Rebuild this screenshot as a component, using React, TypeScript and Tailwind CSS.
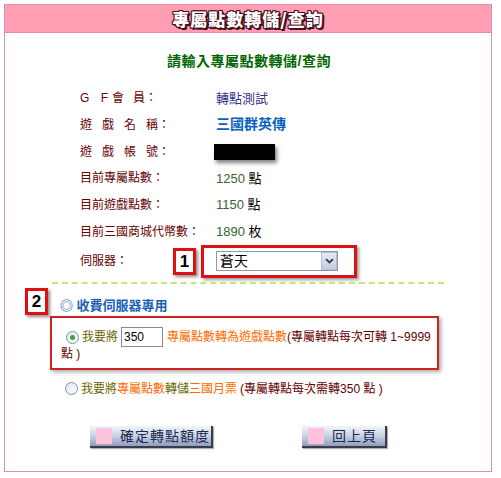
import React from "react";

const font = "font-['Liberation_Sans','Noto_Sans_CJK_TC',sans-serif]";

function Row({ label, children }: { label: React.ReactNode; children: React.ReactNode }) {
  return (
    <div className="flex items-center h-[26.67px]">
      <div className="w-[211px] pl-[75px] text-[12px] text-[#660000] whitespace-nowrap shrink-0">{label}</div>
      <div className="text-[13px] whitespace-nowrap">{children}</div>
    </div>
  );
}

function Marker({ n }: { n: string }) {
  return (
    <div className="w-[23px] h-[27px] border-[3px] border-[#dd1111] bg-white flex items-center justify-center text-[17px] font-bold text-black shadow-[2px_2px_3px_rgba(0,0,0,0.45)]">
      {n}
    </div>
  );
}

function Radio({ checked }: { checked?: boolean }) {
  return (
    <span className="inline-flex w-[13px] h-[13px] rounded-full border border-[#7a8ea8] bg-gradient-to-br from-[#dfe6ee] to-white items-center justify-center mr-[3px] align-middle">
      {checked && <span className="w-[5px] h-[5px] rounded-full bg-[#3fa33f]" />}
    </span>
  );
}

function Btn({ label, w }: { label: string; w: string }) {
  return (
    <div className={`${w} h-[22px] flex items-center whitespace-nowrap bg-gradient-to-b from-[#f2f5fb] via-[#c9d2e3] to-[#8e9ebe] border-r-2 border-b-2 border-[#3a3a48] shadow-[1px_1px_1px_rgba(0,0,0,0.3)]`}>
      <span className="w-[16px] h-[16px] bg-[#ffc2dc] ml-[6px] mr-[8px] shrink-0" />
      <span className="text-[14px] text-[#1c2850] tracking-[1px] font-['Noto_Sans_CJK_TC',sans-serif]">{label}</span>
    </div>
  );
}

export default function App() {
  return (
    <div className={`w-[501px] h-[478px] bg-white pt-[4px] pl-[4px] ${font}`}>
      <div className="w-[488px] h-[468px] border border-[#e38db6] flex flex-col">
        <div className="h-[28px] bg-[#ff9eb2] border-b border-[#e88aa3] flex items-center justify-center">
          <span className="text-[17px] font-black text-white tracking-[1px] font-['Noto_Sans_CJK_TC',sans-serif] [text-shadow:1px_0_0_#4a0f1c,-1px_0_0_#4a0f1c,0_1px_0_#4a0f1c,0_-1px_0_#4a0f1c,1px_1px_0_#4a0f1c,-1px_-1px_0_#4a0f1c,1px_-1px_0_#4a0f1c,-1px_1px_0_#4a0f1c,2px_2px_0_#4a0f1c,2px_1px_0_#4a0f1c,1px_2px_0_#4a0f1c]">
            專屬點數轉儲/查詢
          </span>
        </div>

        <div className="pt-[18px] text-center text-[14px] tracking-[0.5px] font-bold text-[#006600] leading-[20px] pl-[2px]">
          請輸入專屬點數轉儲/查詢
        </div>

        <div className="mt-[14px] flex flex-col">
          <Row label={<span><span className="tracking-[4px]">G F</span>會<span className="ml-[9px]">員：</span></span>}>
            <span className="text-[#333388]">轉點測試</span>
          </Row>
          <Row label={<span><span className="tracking-[10px]">遊戲名</span>稱：</span>}>
            <span className="text-[#0a5fc0] font-bold text-[14px]">三國群英傳</span>
          </Row>
          <Row label={<span><span className="tracking-[10px]">遊戲帳</span>號：</span>}>
            <span className="inline-block w-[61px] h-[16px] bg-black ml-[-2px] shadow-[2px_3px_4px_rgba(0,0,0,0.5)] align-middle" />
          </Row>
          <Row label="目前專屬點數：">
            <span className="text-[#336633]">1250</span> <span className="text-black">點</span>
          </Row>
          <Row label="目前遊戲點數：">
            <span className="text-[#336633]">1150</span> <span className="text-black">點</span>
          </Row>
          <Row label="目前三國商城代幣數：">
            <span className="text-[#336633]">1890</span> <span className="text-black">枚</span>
          </Row>
          <div className="flex items-center h-[33px]">
            <div className="w-[168px] pl-[75px] text-[12px] text-[#660000] whitespace-nowrap shrink-0">伺服器：</div>
            <Marker n="1" />
            <div className="ml-[5px] w-[156px] h-[33px] border-[3px] border-[#dd1111] shadow-[2px_2px_3px_rgba(0,0,0,0.4)] flex items-center pl-[12px]">
              <div className="w-[122px] h-[20px] border border-[#9098a8] bg-white flex items-center justify-between">
                <span className="text-[14px] text-black pl-[3px]">蒼天</span>
                <span className="w-[16px] h-[18px] border border-[#b4bfd2] bg-gradient-to-b from-[#e4eaf4] to-[#c4cee0] flex items-center justify-center">
                  <svg width="9" height="6" viewBox="0 0 9 6"><path d="M1 1.2 L4.5 4.5 L8 1.2" fill="none" stroke="#2c3a58" strokeWidth="1.8" /></svg>
                </span>
              </div>
            </div>
          </div>
        </div>

        <div className="mt-[4px] ml-[47px] w-[392px] border-t-2 border-dashed border-[#c6e37c]" />

        <div className="relative mt-[4px] h-[28px]">
          <div className="absolute left-[20px] top-0">
            <Marker n="2" />
          </div>
          <div className="absolute left-[55px] top-[8px] text-[13px] font-bold text-[#1a5fb4] whitespace-nowrap">◎ 收費伺服器專用</div>
        </div>

        <div className="ml-[45px] w-[389px] h-[54px] border-2 border-[#cc2222] shadow-[2px_2px_4px_rgba(0,0,0,0.35)] pl-[9px] pt-[9px] text-[12px] leading-[20px] whitespace-nowrap">
          <div className="flex items-center">
            <span className="ml-[5px]"><Radio checked /></span>
            <span className="text-[#666600]">我要將</span>
            <span className="inline-flex items-center w-[42px] h-[20px] border border-[#8a8a8a] ml-[3px] mr-[4px] pl-[2px] text-[12px] text-black">350</span>
            <span className="text-[#ff6a00]">專屬點數轉為遊戲點數</span>
            <span className="text-[#660000]">(專屬轉點每次可轉 1~9999</span>
          </div>
          <div className="text-[#660000] leading-[14px]">點 )</div>
        </div>

        <div className="flex items-center mt-[10px] ml-[60px] text-[12px] whitespace-nowrap">
          <Radio />
          <span className="text-[#666600]">我要將</span>
          <span className="text-[#ff6a00]">專屬點數</span>
          <span className="text-[#666600]">轉儲</span>
          <span className="text-[#ff6a00]">三國月票</span>
          <span className="text-[#660000] ml-[3px]">(專屬轉點每次需轉350 點 )</span>
        </div>

        <div className="flex mt-[28px] ml-[85px]">
          <Btn label="確定轉點額度" w="w-[123px]" />
          <div className="ml-[89px]">
            <Btn label="回上頁" w="w-[85px]" />
          </div>
        </div>
      </div>
    </div>
  );
}
